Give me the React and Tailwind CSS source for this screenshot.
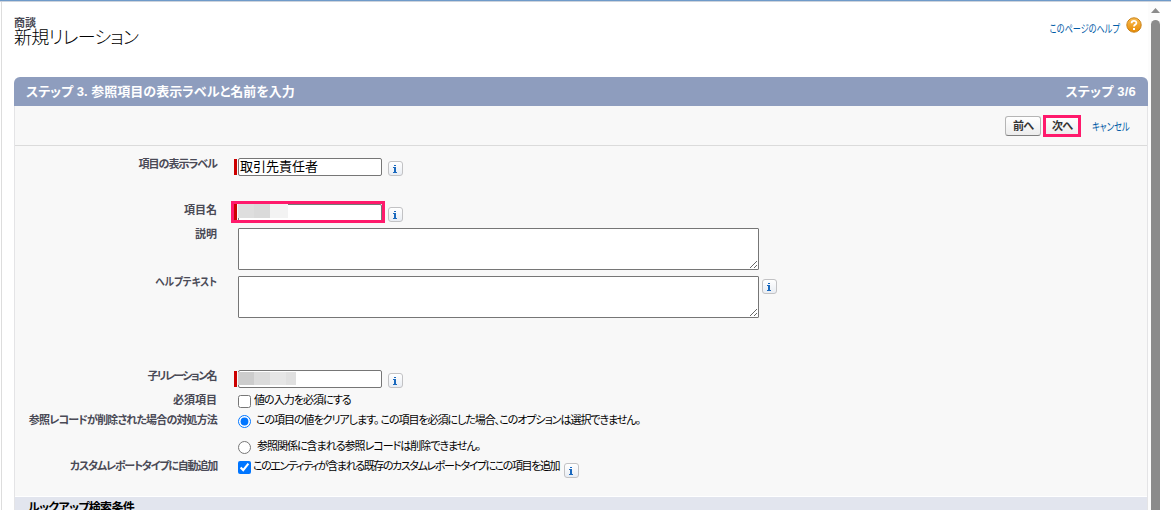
import React from 'react';
import clsx from 'clsx';

const InfoIcon = ({ className }) => (
    <span
        className={clsx(
            'flex h-[15px] w-[15px] shrink-0 items-center justify-center rounded-[3px] border border-[#c2c2c4] bg-linear-to-b from-white to-[#e9edf3]',
            className
        )}
    >
        <svg width="5" height="8" viewBox="0 0 5 8" fill="#1a69be" shapeRendering="crispEdges">
            <rect x="1" y="0" width="2" height="1" />
            <path d="M0 2h3v5h1v1H0V7h1V3H0z" />
        </svg>
    </span>
);

const Row = ({ label, tracking, height, labelPad, fieldPad, children }) => (
    <div className={clsx('flex items-start', height)}>
        <div className={clsx('flex w-[202px] shrink-0 justify-end', labelPad)}>
            <span className={clsx('h-[14px] text-[11px] leading-[14px] font-bold whitespace-nowrap text-[#4a4a56]', tracking)}>
                {label}
            </span>
        </div>
        <div className={clsx('flex items-start pl-[17px]', fieldPad)}>{children}</div>
    </div>
);

const RequiredMark = () => <span className="mr-px h-4 w-[3px] shrink-0 bg-[#c00]" />;

const TextInput = ({ value }) => (
    <input
        type="text"
        defaultValue={value}
        className="h-[18px] w-[144px] shrink-0 rounded-[2px] border border-[#767676] bg-white px-px pt-0 pb-[3px] text-[13px] leading-[13px] text-black outline-none"
    />
);

const TextArea = () => (
    <textarea className="ml-1 block h-[42px] w-[521px] rounded-[1px] border border-[#767676] bg-white outline-none" />
);

// Masked value shown over an input
const Mask = ({ colors }) => (
    <span className="absolute top-[2px] left-[4px] flex">
        {colors.map((color, i) => (
            <span key={i} className={clsx('h-[13px]', color)} />
        ))}
    </span>
);

const Option = ({ type, name, checked, tracking, gap, children }) => (
    <label className={clsx('ml-1 flex items-start', gap)}>
        <input type={type} name={name} defaultChecked={checked} className="m-0 h-[13px] w-[13px] shrink-0" />
        <span className={clsx('-mt-[2px] h-[14px] text-[11px] leading-[14px] whitespace-nowrap text-black', tracking)}>
            {children}
        </span>
    </label>
);

const FormButton = ({ children }) => (
    <button className="flex h-5 w-9 shrink-0 items-center justify-center rounded-[3px] border border-[#b5b5b5] border-b-[#7f7f7f] bg-linear-to-b from-white to-[#ececec] text-[11px] leading-none font-bold tracking-[-0.8px] text-[#333]">
        {children}
    </button>
);

const Scrollbar = () => (
    <div className="flex w-[23px] shrink-0 flex-col bg-white">
        <div className="flex h-full w-3 flex-col items-end bg-[#fcfcfc]">
            <svg className="mt-[6px] mb-[7px] shrink-0" width="9" height="5" viewBox="0 0 9 5">
                <path d="M4.5 0 9 5H0z" fill="#8b8b8b" />
            </svg>
            <div className="w-[9px] grow rounded-t-full bg-[#8b8b8b]" />
        </div>
    </div>
);

const App = () => {
    return (
        <div className="flex h-[510px] w-[1171px] flex-col overflow-hidden bg-white font-['Liberation_Sans','Noto_Sans_CJK_JP',sans-serif] [font-feature-settings:'palt']">
            <div className="h-[2px] shrink-0 border-b border-[#cdd3dc] bg-[#6f9ac9]" />
            <div className="flex min-h-0 grow">
                <main className="ml-px w-[1147px] shrink-0 border-l border-[#ddd] pl-3">
                    {/* Page title */}
                    <header className="flex h-[75px] items-start justify-between pr-[6px]">
                        <div className="pt-[16px]">
                            <h2 className="text-[11px] leading-[11px] font-bold text-[#4a4a56]">商談</h2>
                            <h1 className="text-[18px] leading-[18px] font-light tracking-[-0.7px] whitespace-nowrap text-black">新規リレーション</h1>
                        </div>
                        <a className="flex items-start gap-[6px] pt-[15px] text-[#015ba7]">
                            <span className="origin-right scale-x-[0.74] pt-[5px] text-[11px] leading-[14px] whitespace-nowrap">このページのヘルプ</span>
                            <svg width="16" height="16" viewBox="0 0 16 16">
                                <defs>
                                    <linearGradient id="help" x1="0" y1="0" x2="0" y2="1">
                                        <stop offset="0" stopColor="#f9bd55" />
                                        <stop offset="1" stopColor="#e88a00" />
                                    </linearGradient>
                                </defs>
                                <circle cx="8" cy="8" r="7.2" fill="url(#help)" stroke="#c98218" />
                                <path d="M5.6 6.2C5.6 3 10.4 3.2 10.4 5.9C10.4 7.6 8 7.6 8 9.6" fill="none" stroke="#fff" strokeWidth="1.8" />
                                <rect x="7" y="11" width="2" height="2" fill="#fff" />
                            </svg>
                        </a>
                    </header>

                    <section className="w-[1134px]">
                        <div className="flex h-[29px] items-center justify-between rounded-t-[6px] bg-[#8e9dbe] px-3 text-[13px] font-bold text-white">
                            <span className="whitespace-nowrap">ステップ 3. 参照項目の表示ラベルと名前を入力</span>
                            <span className="tracking-[0.2px] whitespace-nowrap">ステップ 3/6</span>
                        </div>
                        <div className="border-x border-[#e4e4e6] bg-[#f8f8f8]">
                            {/* Toolbar */}
                            <div className="flex h-10 items-start justify-end border-b border-[#dbdbdb] pt-[8px] pr-[17px]">
                                <div className="pt-[2px] pr-[2px]">
                                    <FormButton>前へ</FormButton>
                                </div>
                                <div className="mt-px flex h-[22px] w-[38px] items-center justify-center overflow-hidden border-3 border-[#ff1a6c]">
                                    <FormButton>次へ</FormButton>
                                </div>
                                <a className="ml-[11px] flex w-[38px] justify-end pt-[6px] text-[11px] leading-[14px] whitespace-nowrap text-[#015ba7]">
                                    <span className="origin-right scale-x-[0.76]">キャンセル</span>
                                </a>
                            </div>

                            <div className="h-[350px] pt-px">
                                <Row label="項目の表示ラベル" tracking="tracking-[-1px]" height="h-[46px]" labelPad="pt-[10px]" fieldPad="pt-[11px]">
                                    <div className="flex items-center">
                                        <RequiredMark />
                                        <TextInput value="取引先責任者" />
                                    </div>
                                    <InfoIcon className="mt-[3px] ml-[6px]" />
                                </Row>
                                <Row label="項目名" height="h-[33px]" labelPad="pt-[10px]" fieldPad="pt-[8px]">
                                    <div className="relative -ml-[3px] flex h-[22px] w-[154px] items-start overflow-hidden border-3 border-[#ff1a6c]">
                                        <RequiredMark />
                                        <TextInput value="" />
                                        <span className="absolute top-0 left-[4px] flex">
                                            <span className="h-[14px] w-4 bg-[#dedede]" />
                                            <span className="h-[14px] w-4 bg-[#dadada]" />
                                            <span className="h-[14px] w-[18px] bg-[#f3f3f3]" />
                                        </span>
                                    </div>
                                    <InfoIcon className="mt-[6px] ml-[3px]" />
                                </Row>
                                <Row label="説明" height="h-[48px]" labelPad="pt-px" fieldPad="pt-[2px]">
                                    <TextArea />
                                </Row>
                                <Row label="ヘルプテキスト" tracking="origin-right scale-x-[0.87]" height="h-[86px]" labelPad="pt-px" fieldPad="pt-[2px]">
                                    <TextArea />
                                    <InfoIcon className="mt-[3px] ml-[3px]" />
                                </Row>
                                <Row label="子リレーション名" tracking="tracking-[-1.6px] mr-px" height="h-[32px]" labelPad="pt-[9px]" fieldPad="pt-[10px]">
                                    <div className="relative flex items-center">
                                        <RequiredMark />
                                        <TextInput value="" />
                                        <Mask colors={['w-4 bg-[#ccc]', 'w-4 bg-[#dbdbdb]', 'w-4 bg-[#e6e6e6]', 'w-[10px] bg-[#e0e0e0]']} />
                                    </div>
                                    <InfoIcon className="mt-[3px] ml-[6px]" />
                                </Row>
                                <Row label="必須項目" height="h-[19px]" labelPad="pt-px" fieldPad="pt-[3px]">
                                    <Option type="checkbox" gap="gap-[3px]" tracking="tracking-[-0.95px]">値の入力を必須にする</Option>
                                </Row>
                                <Row
                                    label="参照レコードが削除された場合の対処方法"
                                    tracking="tracking-[-0.85px]"
                                    height="h-[25px]"
                                    labelPad="pt-[2px]"
                                    fieldPad="pt-[4px]"
                                >
                                    <Option type="radio" name="onDelete" checked gap="gap-[5px]" tracking="tracking-[-1.03px]">
                                        この項目の値をクリアします。 この項目を必須にした場合、このオプションは選択できません。
                                    </Option>
                                </Row>
                                <Row height="h-[22px]" fieldPad="pt-[5px]">
                                    <Option type="radio" name="onDelete" gap="gap-[6px]" tracking="tracking-[-1px]">
                                        参照関係に含まれる参照レコードは削除できません。
                                    </Option>
                                </Row>
                                <Row
                                    label="カスタムレポートタイプに自動追加"
                                    tracking="tracking-[-1.2px]"
                                    height="h-[38px]"
                                    labelPad="pt-px"
                                    fieldPad="pt-[3px]"
                                >
                                    <Option type="checkbox" checked gap="gap-[2px]" tracking="tracking-[-1.4px]">
                                        このエンティティが含まれる既存のカスタムレポートタイプにこの項目を追加
                                    </Option>
                                    <InfoIcon className="mt-[2px] ml-[5px]" />
                                </Row>
                            </div>

                            <h3 className="h-8 border-t border-white bg-[#e2e5ee] pt-[3px] pl-[13px] text-[12px] leading-[16px] font-bold tracking-[-0.7px] whitespace-nowrap text-black">
                                ルックアップ検索条件
                            </h3>
                        </div>
                    </section>
                </main>
                <Scrollbar />
            </div>
        </div>
    );
};

export default App;
